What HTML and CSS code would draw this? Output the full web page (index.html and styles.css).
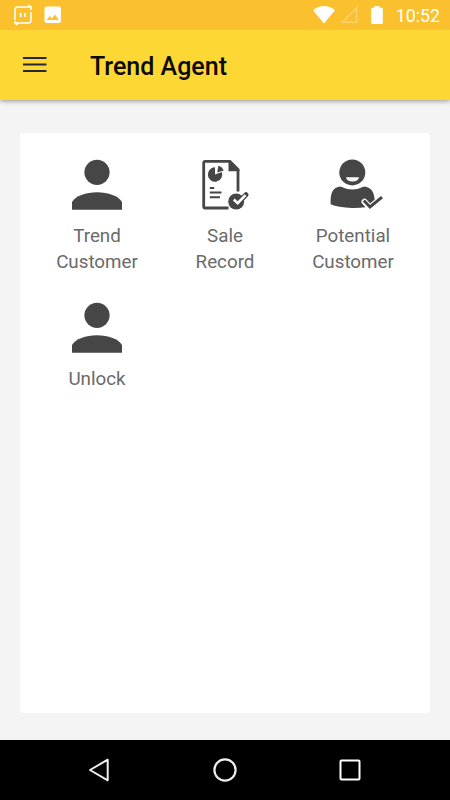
FILE: index.html
```html
<!DOCTYPE html>
<html lang="en">
  <head>
    <meta charset="UTF-8" />
    <meta name="viewport" content="width=device-width, initial-scale=1.0" />
    <title>Trend Agent</title>
    <link rel="stylesheet" href="styles.css">
  </head>
  <body>
    <div class="status-bar">
      <div class="status-left">
        <svg width="20" height="22" viewBox="0 0 20 22" fill="none" stroke="#fff" stroke-width="1.6">
          <path d="M2 16V6Q2 3 5 3h12M15.500 1l2.500 2v3M18 8v8q0 3-3 3H3M4.500 21l-2.500-2v-2"></path>
          <path d="M7.600 9v4M12 9v4" stroke-width="1.8"></path>
        </svg>
        <svg width="18" height="18" viewBox="0 0 18 18">
          <path fill="#fff" fill-rule="evenodd" d="M2.500.5h12.400q2 0 2 2v12.400q0 2-2 2H2.500q-2 0-2-2V2.500q0-2 2-2zM2.500 14h12.400l-4-5.500-3.100 4-2-2.500z"></path>
        </svg>
      </div>
      <div class="status-right">
        <svg class="wifi" width="24" height="20" viewBox="0 0 24 20">
          <path fill="#fff" d="M1 5.200Q12-3 23 5.200L12 18.500z"></path>
        </svg>
        <svg class="signal" width="18" height="18" viewBox="0 0 18 18">
          <path fill="none" stroke="#fdd36f" stroke-width="1.500" d="M2.300 16.300H16.600V2z"></path>
        </svg>
        <svg class="battery" width="12" height="18" viewBox="0 0 12 18">
          <path fill="#fff" d="M3.500 0h5v1.800H11q.800 0 .800.800V17q0 1-1 1H1.200q-1 0-1-1V2.600q0-.800.800-.800h2.500z"></path>
        </svg>
        <span class="clock">10:52</span>
      </div>
    </div>

    <header class="toolbar">
      <svg class="menu-icon" width="24" height="16" viewBox="0 0 24 16" stroke="#25283a" stroke-width="2">
        <path d="M0 1h23.500M0 7.500h23.500M0 14h23.500"></path>
      </svg>
      <h1 class="title">Trend Agent</h1>
    </header>

    <main class="content">
      <div class="card">
        <div class="item">
          <svg width="52" height="51" viewBox="0 0 52 51" fill="#464646">
            <circle cx="26" cy="13.300" r="12.600"></circle>
            <path d="M1 50.800V43C4 37 15 33.200 26 33.200S48 37 51 43v7.800z"></path>
          </svg>
          <span class="label">Trend<br>Customer</span>
        </div>
        <div class="item">
          <!-- report with check badge -->
          <svg width="52" height="51" viewBox="0 0 52 51">
            <path fill="none" stroke="#464646" stroke-width="2.800" d="M31 2.400H6.200Q4.700 2.400 4.700 3.900V47.500Q4.700 49 6.200 49H29.500M39 32.500V11"></path>
            <path fill="#464646" d="M29.500 1h2l9 9v2.300h-11z"></path>
            <path fill="#464646" d="M16 8.300v7.200l6.800-2.500A7.200 7.200 0 1 1 16 8.300z"></path>
            <path fill="#464646" d="M18.200 13.500l1.200-6.700q4 1.200 5.300 4.800z"></path>
            <path stroke="#464646" stroke-width="2" d="M10.800 29h4.400M10.800 33.500h11.700M10.800 38.200h10.200"></path>
            <circle cx="37.200" cy="42.500" r="8" fill="#464646"></circle>
            <path fill="none" stroke="#464646" stroke-width="5" stroke-linejoin="round" stroke-linecap="round" d="M35.300 41l3.400 3.200 8.300-8.500"></path>
            <path fill="none" stroke="#fff" stroke-width="2.600" d="M34.800 40.500l3.900 3.700 7.800-8"></path>
          </svg>
          <span class="label">Sale<br>Record</span>
        </div>
        <div class="item">
          <svg width="60" height="51" viewBox="0 0 60 51">
            <circle cx="29.300" cy="13.400" r="13" fill="#464646"></circle>
            <path fill="#fff" d="M23 18.300h13q-1 4.300-6.500 4.300T23 18.300z"></path>
            <path fill="#464646" d="M7.600 45.300C7.400 34 9.500 28.300 17.500 27.600Q29.300 33.600 41 27.600C49 28.300 51.300 34 51.800 42V46Q42 49.300 29 49 15 48.500 7.600 45.300z"></path>
            <path fill="none" stroke="#fff" stroke-width="6" stroke-linecap="round" d="M41.500 42.800l5.300 5.700 11.500-9.500"></path>
            <path fill="none" stroke="#464646" stroke-width="3" d="M40.800 41.500l6.200 6.500L59 38.200"></path>
          </svg>
          <span class="label">Potential<br>Customer</span>
        </div>
        <div class="item">
          <svg width="52" height="51" viewBox="0 0 52 51" fill="#464646">
            <circle cx="26" cy="13.300" r="12.600"></circle>
            <path d="M1 50.800V43C4 37 15 33.200 26 33.200S48 37 51 43v7.800z"></path>
          </svg>
          <span class="label">Unlock</span>
        </div>
      </div>
    </main>

    <nav class="nav-bar">
      <svg width="24" height="26" viewBox="0 0 24 26" fill="none" stroke="#eee" stroke-width="2" stroke-linejoin="round">
        <path d="M20.700 2.700V23.300L3 13z"></path>
      </svg>
      <svg width="26" height="26" viewBox="0 0 26 26" fill="none" stroke="#eee" stroke-width="2.200">
        <circle cx="13" cy="13" r="10.600"></circle>
      </svg>
      <svg width="24" height="26" viewBox="0 0 24 26" fill="none" stroke="#fff" stroke-width="2">
        <rect x="2.500" y="3.500" width="19" height="19" rx="1"></rect>
      </svg>
    </nav>
  </body>
</html>
```
FILE: styles.css
```css
* {
  box-sizing: border-box;
}

body {
  margin: 0;
  height: 100vh;
  display: flex;
  flex-direction: column;
  background-color: #f4f4f4;
  font-family: Roboto, sans-serif;
}

svg {
  display: block;
  flex-shrink: 0;
}

.status-bar {
  position: relative;
  z-index: 1;
  height: 30px;
  padding: 0 10px 0 13px;
  display: flex;
  align-items: center;
  justify-content: space-between;
  background-color: #fbc02d;
}

.status-left,
.status-right {
  display: flex;
  align-items: center;
}

.status-left {
  gap: 11px;
}

.signal {
  margin-left: 4px;
}

.battery {
  margin: 0 13px;
}

.clock {
  color: #fff;
  font-size: 17.8px;
  line-height: 30px;
  padding-top: 1px;
}

/* App bar */
.toolbar {
  height: 70px;
  padding-left: 23px;
  display: flex;
  align-items: center;
  background-color: #fdd835;
  box-shadow: 0 1px 5px rgba(0, 0, 0, 0.4);
}

.title {
  margin: 2px 0 0 43px;
  font-size: 25px;
  font-weight: 500;
  color: #0c0b03;
}

.content {
  flex: 1;
  display: flex;
  padding: 33px 20px 27px;
}

.card {
  flex: 1;
  display: grid;
  grid-template-columns: repeat(3, 128px);
  align-content: start;
  justify-content: center;
  row-gap: 27px;
  padding-top: 26px;
  background-color: #fff;
  border-radius: 3px;
}

.item {
  display: flex;
  flex-direction: column;
  align-items: center;
  gap: 14px;
}

.label {
  color: #6a6a6a;
  font-size: 18.8px;
  line-height: 25.5px;
  text-align: center;
}

/* Android navigation */
.nav-bar {
  height: 60px;
  padding: 0 88px 0 87px;
  display: flex;
  align-items: center;
  justify-content: space-between;
  background-color: #000;
}
```
